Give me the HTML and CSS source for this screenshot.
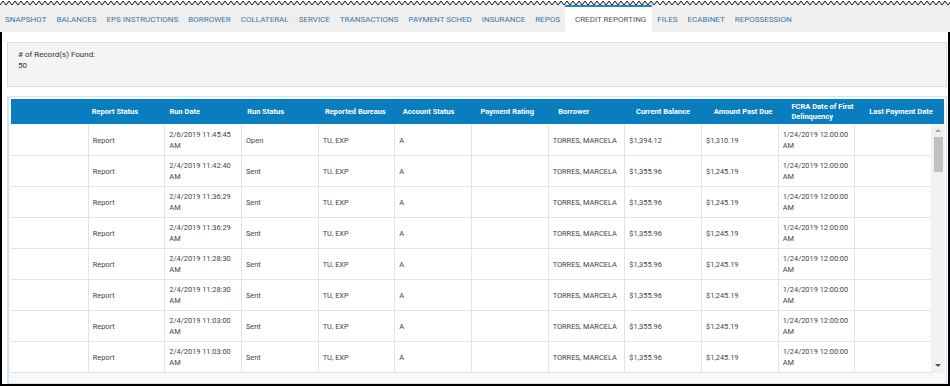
FILE: index.html
```html
<!DOCTYPE html>
<html lang="en">
<head>
    <meta charset="UTF-8">
    <title>Credit Reporting</title>
    <link rel="stylesheet" href="styles.css">
</head>
<body>
    <div class="tab-strip">
        <svg class="torn-edge" width="950" height="6" viewBox="0 0 950 6" preserveAspectRatio="none">
            <defs>
                <pattern id="zz" width="6" height="6" patternUnits="userSpaceOnUse">
                    <path d="M0 5 L3 1 L6 5 V6 H0 Z" fill="#efefef"/>
                    <path d="M0 5 L3 1 L6 5" fill="none" stroke="#111" stroke-width="1"/>
                </pattern>
            </defs>
            <rect x="0" y="0" width="950" height="6" fill="url(#zz)"/>
        </svg>
        <nav class="tabs">
            <a class="tab">SNAPSHOT</a>
            <a class="tab">BALANCES</a>
            <a class="tab">EPS INSTRUCTIONS</a>
            <a class="tab">BORROWER</a>
            <a class="tab">COLLATERAL</a>
            <a class="tab">SERVICE</a>
            <a class="tab">TRANSACTIONS</a>
            <a class="tab">PAYMENT SCHED</a>
            <a class="tab">INSURANCE</a>
            <a class="tab">REPOS</a>
            <a class="tab active">CREDIT REPORTING</a>
            <a class="tab">FILES</a>
            <a class="tab">ECABINET</a>
            <a class="tab">REPOSSESSION</a>
        </nav>
    </div>

    <div class="page">
        <!-- record count -->
        <div class="records">
            <p># of Record(s) Found:</p>
            <p>50</p>
        </div>

        <!-- grid -->
        <div class="grid-panel">
            <div class="grid-head">
                <div></div>
                <div>Report Status</div>
                <div>Run Date</div>
                <div>Run Status</div>
                <div>Reported Bureaus</div>
                <div>Account Status</div>
                <div>Payment Rating</div>
                <div>Borrower</div>
                <div>Current Balance</div>
                <div>Amount Past Due</div>
                <div>FCRA Date of First Delinquency</div>
                <div>Last Payment Date</div>
            </div>
            <div class="grid-body">
                <div class="rows">
                    <div class="row">
                        <div></div><div>Report</div><div>2/6/2019 11:45:45 AM</div><div>Open</div><div>TU, EXP</div><div>A</div><div></div><div>TORRES, MARCELA</div><div>$1,394.12</div><div>$1,310.19</div><div>1/24/2019 12:00:00 AM</div><div></div>
                    </div>
                    <div class="row">
                        <div></div><div>Report</div><div>2/4/2019 11:42:40 AM</div><div>Sent</div><div>TU, EXP</div><div>A</div><div></div><div>TORRES, MARCELA</div><div>$1,355.96</div><div>$1,245.19</div><div>1/24/2019 12:00:00 AM</div><div></div>
                    </div>
                    <div class="row">
                        <div></div><div>Report</div><div>2/4/2019 11:36:29 AM</div><div>Sent</div><div>TU, EXP</div><div>A</div><div></div><div>TORRES, MARCELA</div><div>$1,355.96</div><div>$1,245.19</div><div>1/24/2019 12:00:00 AM</div><div></div>
                    </div>
                    <div class="row">
                        <div></div><div>Report</div><div>2/4/2019 11:36:29 AM</div><div>Sent</div><div>TU, EXP</div><div>A</div><div></div><div>TORRES, MARCELA</div><div>$1,355.96</div><div>$1,245.19</div><div>1/24/2019 12:00:00 AM</div><div></div>
                    </div>
                    <div class="row">
                        <div></div><div>Report</div><div>2/4/2019 11:28:30 AM</div><div>Sent</div><div>TU, EXP</div><div>A</div><div></div><div>TORRES, MARCELA</div><div>$1,355.96</div><div>$1,245.19</div><div>1/24/2019 12:00:00 AM</div><div></div>
                    </div>
                    <div class="row">
                        <div></div><div>Report</div><div>2/4/2019 11:28:30 AM</div><div>Sent</div><div>TU, EXP</div><div>A</div><div></div><div>TORRES, MARCELA</div><div>$1,355.96</div><div>$1,245.19</div><div>1/24/2019 12:00:00 AM</div><div></div>
                    </div>
                    <div class="row">
                        <div></div><div>Report</div><div>2/4/2019 11:03:00 AM</div><div>Sent</div><div>TU, EXP</div><div>A</div><div></div><div>TORRES, MARCELA</div><div>$1,355.96</div><div>$1,245.19</div><div>1/24/2019 12:00:00 AM</div><div></div>
                    </div>
                    <div class="row">
                        <div></div><div>Report</div><div>2/4/2019 11:03:00 AM</div><div>Sent</div><div>TU, EXP</div><div>A</div><div></div><div>TORRES, MARCELA</div><div>$1,355.96</div><div>$1,245.19</div><div>1/24/2019 12:00:00 AM</div><div></div>
                    </div>
                </div>
                <div class="scrollbar">
                    <span class="arrow up"></span>
                    <div class="track"><div class="thumb"></div></div>
                    <span class="arrow down"></span>
                </div>
            </div>
            <div class="grid-foot"></div>
        </div>
    </div>
</body>
</html>
```

FILE: styles.css
```css
body {
    margin: 0;
    width: 950px;
    height: 386px;
    overflow: hidden;
    background: #fff;
    font-family: Roboto, 'Liberation Sans', sans-serif;
    color: #444;
}
.tab-strip {
    background: #fff;
}
.torn-edge {
    display: block;
}
.tabs {
    display: flex;
    height: 26px;
    background: #efefef;
    padding-left: 0;
}
.tab {
    display: flex;
    align-items: center;
    padding: 0 5px;
    font-size: 8px;
    color: #3b77a6;
    white-space: nowrap;
}
.tab.active {
    background: #fff;
    color: #555;
    border-top: 2px solid #1c88c7;
    margin-top: -1px;
    padding: 0 6px 0 10px;
}
.page {
    height: 342px;
    border: 2px solid #000;
    border-top: none;
    padding: 10px 1px 0 5px;
}
.records {
    box-sizing: border-box;
    height: 45px;
    background: #f4f4f4;
    border: 1px solid #dcdcdc;
    padding: 6px 10px 0;
    font-size: 8px;
    line-height: 11px;
    color: #333;
}
.records p {
    margin: 0;
}
.grid-panel {
    margin-top: 9px;
    border: 1px solid #d3e4ef;
    border-left-width: 2px;
    padding: 2px 2px 0;
    background: #f7f8fa;
}
.grid-head {
    display: grid;
    grid-template-columns: repeat(12, 1fr);
    height: 25px;
    background: #0a7dbe;
    color: #fff;
    font-size: 7.5px;
    font-weight: bold;
    line-height: 10px;
}
.grid-head div {
    display: flex;
    align-items: center;
    padding: 0 3px;
}
.grid-body {
    display: flex;
    height: 248px;
    margin-top: 1px;
    background: #fff;
}
.rows {
    flex: 1;
    overflow: hidden;
}
.row {
    display: grid;
    grid-template-columns: repeat(12, 1fr);
    height: 31px;
    box-sizing: border-box;
    border-bottom: 1px solid #e3e3e3;
    font-size: 7.4px;
    line-height: 11px;
}
.row div {
    display: flex;
    align-items: center;
    padding: 0 4px;
    border-left: 1px solid #e3e3e3;
}
.row div:first-child {
    border-left: none;
}
.scrollbar {
    width: 13px;
    display: flex;
    flex-direction: column;
    align-items: center;
    background: #f1f1f1;
}
.arrow {
    width: 0;
    height: 0;
    border-left: 3px solid transparent;
    border-right: 3px solid transparent;
}
.arrow.up {
    margin: 4px 0 5px;
    border-bottom: 3px solid #a3a3a3;
}
.arrow.down {
    margin: 5px 0 6px;
    border-top: 3px solid #505050;
}
.track {
    flex: 1;
    width: 9px;
    padding-left: 2px;
}
.thumb {
    height: 35px;
    background: #c1c1c1;
}
.grid-foot {
    height: 10px;
}
```
